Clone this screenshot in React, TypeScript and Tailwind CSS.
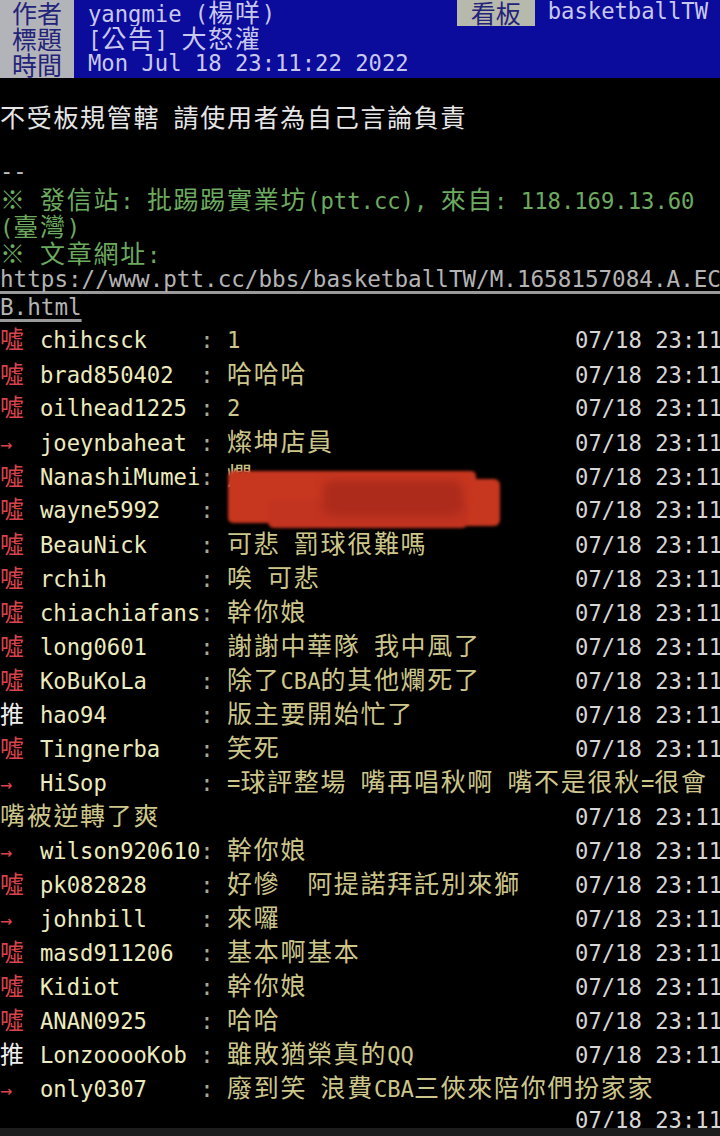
import React from "react";

const cjk = "font-['Noto_Sans_CJK_TC','Noto_Sans_CJK_JP',sans-serif] text-[25px] tracking-[1.7px]";

// splits a line into ascii / wide runs so wide chars take two columns
function T({ s }: { s: string }) {
  const parts = s.match(/[\x00-\x7f]+|[^\x00-\x7f]+/g) ?? [];
  return (
    <>
      {parts.map((p, i) =>
        /[^\x00-\x7f]/.test(p) ? (
          <span key={i} className={cjk}>
            {p}
          </span>
        ) : (
          <span key={i}>{p}</span>
        )
      )}
    </>
  );
}

type Push = { tag: "噓" | "推" | "→"; id: string; text: string; time?: boolean };

const pushes: Push[] = [
  { tag: "噓", id: "chihcsck", text: "1", time: true },
  { tag: "噓", id: "brad850402", text: "哈哈哈", time: true },
  { tag: "噓", id: "oilhead1225", text: "2", time: true },
  { tag: "→", id: "joeynbaheat", text: "燦坤店員", time: true },
  { tag: "噓", id: "NanashiMumei", text: "爛", time: true },
  { tag: "噓", id: "wayne5992", text: "", time: true },
  { tag: "噓", id: "BeauNick", text: "可悲 罰球很難嗎", time: true },
  { tag: "噓", id: "rchih", text: "唉 可悲", time: true },
  { tag: "噓", id: "chiachiafans", text: "幹你娘", time: true },
  { tag: "噓", id: "long0601", text: "謝謝中華隊 我中風了", time: true },
  { tag: "噓", id: "KoBuKoLa", text: "除了CBA的其他爛死了", time: true },
  { tag: "推", id: "hao94", text: "版主要開始忙了", time: true },
  { tag: "噓", id: "Tingnerba", text: "笑死", time: true },
  { tag: "→", id: "HiSop", text: "=球評整場 嘴再唱秋啊 嘴不是很秋=很會" },
];

const pushes2: Push[] = [
  { tag: "→", id: "wilson920610", text: "幹你娘", time: true },
  { tag: "噓", id: "pk082828", text: "好慘  阿提諾拜託別來獅", time: true },
  { tag: "→", id: "johnbill", text: "來囉", time: true },
  { tag: "噓", id: "masd911206", text: "基本啊基本", time: true },
  { tag: "噓", id: "Kidiot", text: "幹你娘", time: true },
  { tag: "噓", id: "ANAN0925", text: "哈哈", time: true },
  { tag: "推", id: "LonzooooKob", text: "雖敗猶榮真的QQ", time: true },
  { tag: "→", id: "only0307", text: "廢到笑 浪費CBA三俠來陪你們扮家家" },
];

function Time() {
  return <span className="ml-auto -mr-[2px] shrink-0 text-[#d6d6d6]">07/18 23:11</span>;
}

function PushRow({ p }: { p: Push }) {
  return (
    <div className="flex h-[34px] items-baseline whitespace-pre leading-[34px]">
      <span
        className={`w-[40px] shrink-0 ${
          p.tag === "推" ? "text-[#eeeeee]" : "text-[#d9434b]"
        } ${p.tag === "→" ? "text-[20px]" : "font-['Noto_Sans_CJK_TC',sans-serif] text-[24px]"}`}
      >
        {p.tag}
      </span>
      <span className="text-[#ecebbe]">{p.id.padEnd(12)}</span>
      <span className="text-[#a9a892]">: </span>
      <span className="text-[#cdc68a]">
        <T s={p.text} />
      </span>
      {p.time && <Time />}
    </div>
  );
}

function HeadRow({ label, children }: { label: string; children: React.ReactNode }) {
  return (
    <div className="flex h-[26px] overflow-hidden">
      <div className="w-[74px] shrink-0 bg-[#b3b4b9] text-center font-['Noto_Sans_CJK_TC',sans-serif] text-[25px] leading-[25px] text-[#23237a]">
        {label}
      </div>
      <div className="flex flex-1 items-start whitespace-pre bg-[#0b0b9c] pl-[14px] leading-[22px] text-[#c8c8ee]">
        {children}
      </div>
    </div>
  );
}

export default function App() {
  return (
    <div className="relative flex h-[1136px] w-[720px] flex-col overflow-hidden bg-black font-['DejaVu_Sans_Mono',monospace] text-[22.2px]">
      <div className="min-h-0 flex-1 overflow-hidden">
        {/* ── Header ── */}
        <HeadRow label="作者">
          <span>
            <T s="yangmie (楊咩)" />
          </span>
          <span className="ml-auto h-[26px] w-[78px] bg-[#b8b9ad] text-center font-['Noto_Sans_CJK_TC',sans-serif] text-[25px] leading-[25px] text-[#23237a]">
            看板
          </span>
          <span className="ml-[13px] mr-[12px]">basketballTW</span>
        </HeadRow>
        <HeadRow label="標題">
          <span>
            <T s="[公告] 大怒灌" />
          </span>
        </HeadRow>
        <HeadRow label="時間">
          <span>Mon Jul 18 23:11:22 2022</span>
        </HeadRow>

        {/* ── Body ── */}
        <div className="whitespace-pre leading-[27.2px]">
          <div className="h-[25.2px]" />
          <div className="h-[27.2px] text-[#e6e6e6]">
            <T s="不受板規管轄 請使用者為自己言論負責" />
          </div>
          <div className="h-[27.2px]" />
          <div className="h-[27.2px] text-[#bcbcbc]">--</div>
          <div className="h-[27.2px] text-[#6cab5f]">
            <T s="※ 發信站: 批踢踢實業坊(ptt.cc), 來自: 118.169.13.60" />
          </div>
          <div className="h-[27.2px] text-[#6cab5f]">
            <T s="(臺灣)" />
          </div>
          <div className="h-[27.2px] text-[#6cab5f]">
            <T s="※ 文章網址:" />
          </div>
          <div className="h-[27.2px] overflow-hidden">
            <span className="text-[22.6px] text-[#b4b4b4] underline decoration-[#9a9a9a] decoration-[3px] underline-offset-[4px]">
              https://www.ptt.cc/bbs/basketballTW/M.1658157084.A.EC
            </span>
          </div>
          <div className="h-[27.2px]">
            <span className="text-[22.6px] text-[#b4b4b4] underline decoration-[#9a9a9a] decoration-[3px] underline-offset-[4px]">
              B.html
            </span>
          </div>
        </div>

        {/* ── Pushes ── */}
        <div>
          {pushes.map((p) => (
            <PushRow key={p.id} p={p} />
          ))}
          <div className="flex h-[34px] items-baseline whitespace-pre leading-[34px] text-[#cdc68a]">
            <T s="嘴被逆轉了爽" />
            <Time />
          </div>
          {pushes2.map((p) => (
            <PushRow key={p.id} p={p} />
          ))}
          <div className="flex h-[34px] items-baseline whitespace-pre leading-[34px]">
            <Time />
          </div>
        </div>
      </div>
      <div className="h-[8px] shrink-0 bg-[#1d1d1d]" />

      {/* red smudge over the censored rows */}
      <div className="pointer-events-none absolute left-[228px] top-[470px] h-[60px] w-[274px] blur-[1.5px]">
        <div className="absolute left-0 top-[1px] h-[52px] w-[248px] rounded-[5px] bg-[#c7361f]" />
        <div className="absolute left-[212px] top-[9px] h-[47px] w-[60px] rounded-[6px] bg-[#c7361f]" />
        <div className="absolute left-[40px] top-[30px] h-[28px] w-[200px] rounded-[6px] bg-[#c23320]" />
        <div className="absolute left-[95px] top-[10px] h-[36px] w-[140px] rounded-[10px] bg-[#ad2b1b] blur-[4px]" />
      </div>
    </div>
  );
}
